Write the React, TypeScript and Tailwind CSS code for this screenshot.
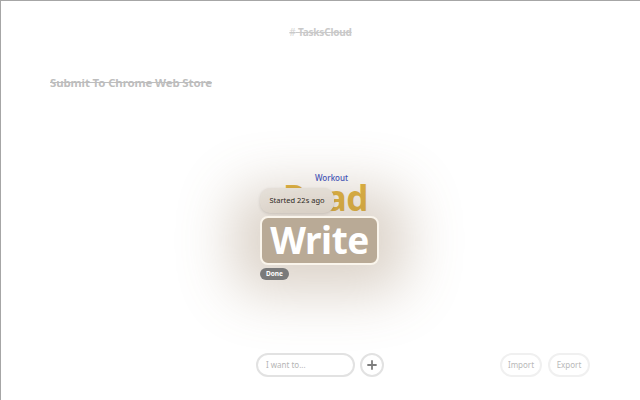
import React from "react";

export default function App() {
  const font = { fontFamily: '"Noto Sans", "Open Sans", sans-serif' };
  return (
    <div
      className="relative w-[640px] h-[400px] bg-white border-t border-l border-[#a6a6a6] overflow-hidden flex flex-col"
      style={font}
    >
      {/* header */}
      <div className="pt-[24px] flex justify-center">
        <div className="text-[10px] font-bold leading-[14px] text-[#c9c9c9] line-through tracking-[-0.2px]">
          <span className="font-normal text-[#d4d4d4]">#</span> TasksCloud
        </div>
      </div>

      {/* cloud canvas */}
      <div className="relative flex-1">
        <div className="absolute left-[49px] top-[35px] text-[11.4px] font-bold text-[#bdbdbd] line-through tracking-[-0.1px]">
          Submit To Chrome Web Store
        </div>

        <div className="absolute left-[314px] top-[135px] text-[8px] font-medium text-[#3a4fc2] leading-none">
          Workout
        </div>

        <div className="absolute left-[282px] top-[144px] text-[35px] font-bold text-[#e2b540] leading-[30px] tracking-[-0.5px]">
          Read
        </div>

        <div className="absolute left-[259px] top-[149px] w-[74px] h-[25px] rounded-[10px] bg-[#f4f2ef] shadow-[0_1px_3px_rgba(0,0,0,0.15)] flex items-center justify-center text-[7.5px] text-[#111]">
          Started 22s ago
        </div>

        <div className="absolute left-[259px] top-[177px] w-[119px] h-[49px] rounded-[8px] bg-[#b9aa96] border-2 border-[#faf5ec] shadow-[0_0_55px_28px_rgba(140,110,75,0.3)] flex items-center justify-center">
          <span className="text-[37px] font-bold text-white leading-none tracking-[-0.5px] -mt-[2px]">
            Write
          </span>
        </div>

        <div className="absolute left-[259px] top-[229px] w-[29px] h-[12px] rounded-full bg-[#7a7a7a] flex items-center justify-center text-[6.5px] font-bold text-white">
          Done
        </div>
      </div>

      {/* bottom bar */}
      <div className="flex items-center pb-[23px]">
        <div className="ml-[255px] w-[99px] h-[24px] rounded-full border-2 border-[#e2e2e2] flex items-center pl-[8px] text-[8px] text-[#b5b5b5]">
          I want to...
        </div>
        <div className="ml-[5px] w-[24px] h-[24px] rounded-full border-2 border-[#e2e2e2] flex items-center justify-center">
          <svg width="10" height="10" viewBox="0 0 10 10">
            <path d="M5 1v8M1 5h8" stroke="#7d7d7d" strokeWidth="1.8" strokeLinecap="round" />
          </svg>
        </div>
        <div className="ml-[116px] w-[42px] h-[24px] rounded-full border-2 border-[#f0f0f0] flex items-center justify-center text-[8px] text-[#b8b8b8]">
          Import
        </div>
        <div className="ml-[6px] w-[42px] h-[24px] rounded-full border-2 border-[#f0f0f0] flex items-center justify-center text-[8px] text-[#b8b8b8]">
          Export
        </div>
      </div>
    </div>
  );
}
